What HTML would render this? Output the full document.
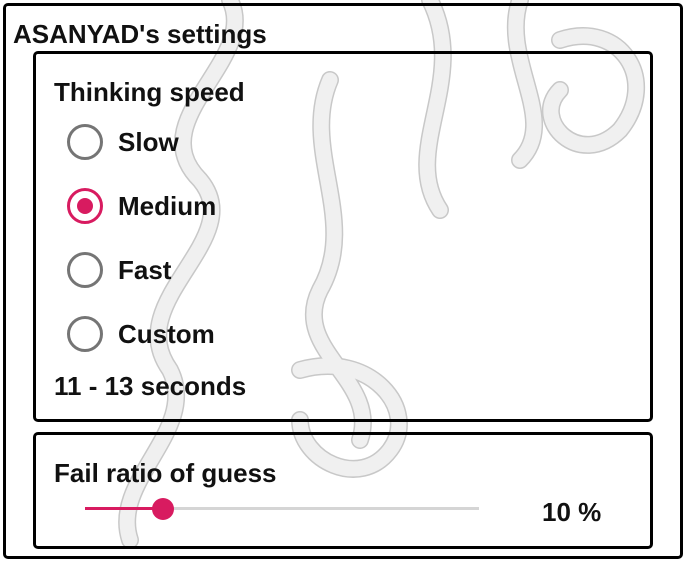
<!DOCTYPE html>
<html><head><style>
body{margin:0;width:685px;height:561px;background:#fff;position:relative;overflow:hidden;font-family:"Liberation Sans",Arial,sans-serif;font-weight:bold;color:#111}
.b{position:absolute;border:3px solid #000;border-radius:5px;box-sizing:border-box}
.t{position:absolute;font-size:26px;line-height:28px;white-space:nowrap}
.r{position:absolute;width:36px;height:36px;border:3px solid #757575;border-radius:50%;box-sizing:border-box;left:67px}
.r.on{border-color:#d81b60}
.r.on:after{content:"";position:absolute;left:7px;top:7px;width:16px;height:16px;border-radius:50%;background:#d81b60}
svg{position:absolute;left:0;top:0}
</style></head><body>
<svg width="685" height="561" fill="none" stroke-linecap="round">
<g stroke="#c8c8c8" stroke-width="18"><path d="M230 0 C260 60 140 120 200 180 C250 240 120 300 170 370 C200 430 110 480 130 540"/><path d="M330 80 C300 150 360 220 320 290 C290 350 380 380 360 440"/><path d="M430 0 C470 80 400 150 440 210"/><path d="M560 40 C620 20 660 80 620 130 C580 170 530 120 560 90"/><path d="M300 370 C370 350 420 410 390 450 C360 490 300 460 300 420"/><path d="M520 0 C500 60 560 120 520 160"/></g>
<g stroke="#f0f0f0" stroke-width="15"><path d="M230 0 C260 60 140 120 200 180 C250 240 120 300 170 370 C200 430 110 480 130 540"/><path d="M330 80 C300 150 360 220 320 290 C290 350 380 380 360 440"/><path d="M430 0 C470 80 400 150 440 210"/><path d="M560 40 C620 20 660 80 620 130 C580 170 530 120 560 90"/><path d="M300 370 C370 350 420 410 390 450 C360 490 300 460 300 420"/><path d="M520 0 C500 60 560 120 520 160"/></g>
</svg>
<div class="b" style="left:3px;top:3px;width:680px;height:556px"></div>
<div class="b" style="left:33px;top:51px;width:620px;height:371px"></div>
<div class="b" style="left:33px;top:432px;width:620px;height:117px"></div>
<div class="t" style="left:13px;top:20px">ASANYAD's settings</div>
<div class="t" style="left:54px;top:78px">Thinking speed</div>
<div class="r" style="top:124px"></div><div class="t" style="left:118px;top:128px">Slow</div>
<div class="r on" style="top:188px"></div><div class="t" style="left:118px;top:192px">Medium</div>
<div class="r" style="top:252px"></div><div class="t" style="left:118px;top:256px">Fast</div>
<div class="r" style="top:316px"></div><div class="t" style="left:118px;top:320px">Custom</div>
<div class="t" style="left:54px;top:372px">11 - 13 seconds</div>
<div class="t" style="left:54px;top:459px">Fail ratio of guess</div>
<div style="position:absolute;left:85px;top:507px;width:394px;height:3px;background:#d5d5d5"></div>
<div style="position:absolute;left:85px;top:507px;width:78px;height:3px;background:#d81b60"></div>
<div style="position:absolute;left:152px;top:498px;width:22px;height:22px;border-radius:50%;background:#d81b60"></div>
<div class="t" style="left:542px;top:498px">10 %</div>
</body></html>
